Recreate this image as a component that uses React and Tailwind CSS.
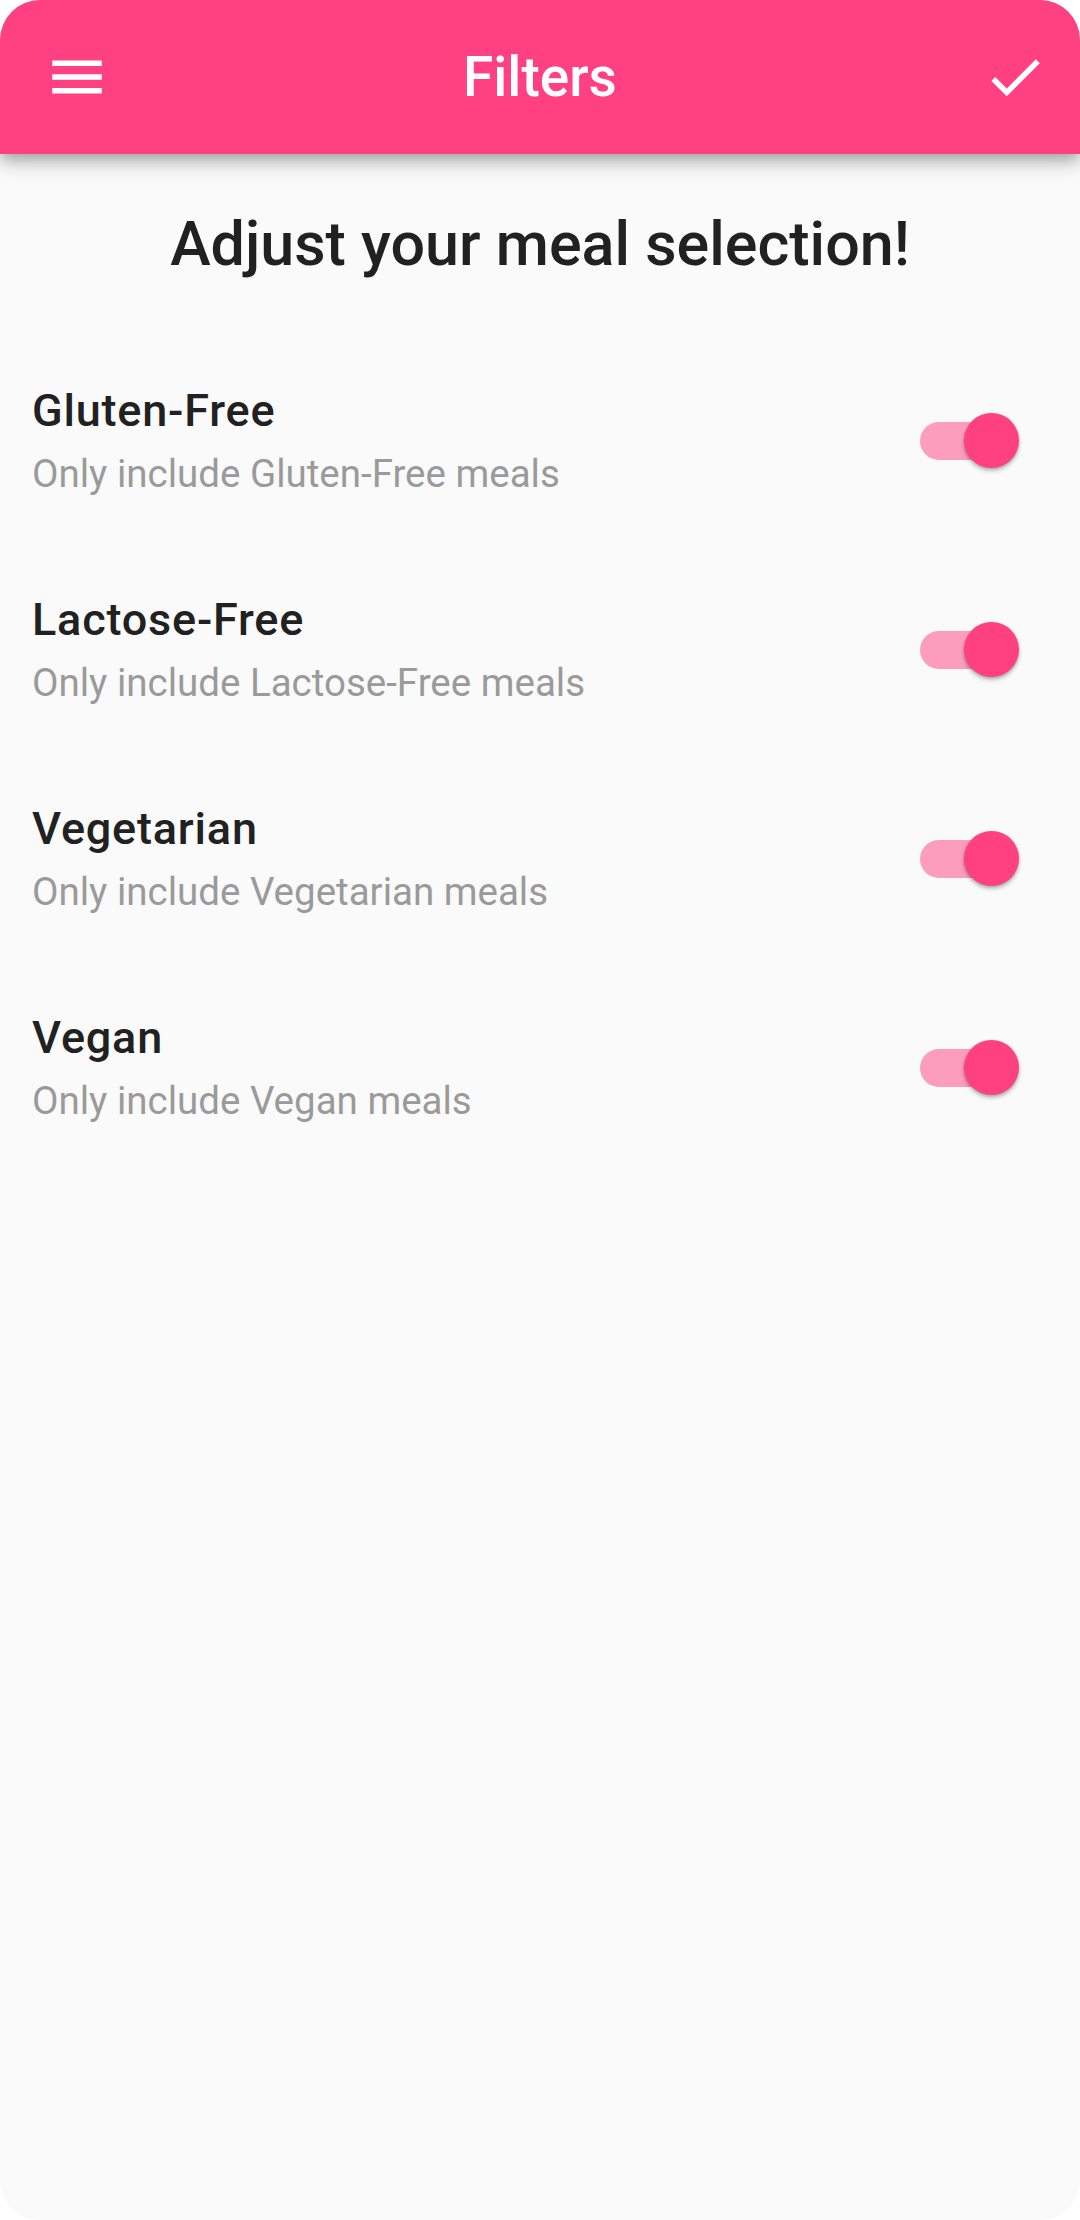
import React from 'react';

const filters = [
    { title: 'Gluten-Free', subtitle: 'Only include Gluten-Free meals' },
    { title: 'Lactose-Free', subtitle: 'Only include Lactose-Free meals' },
    { title: 'Vegetarian', subtitle: 'Only include Vegetarian meals' },
    { title: 'Vegan', subtitle: 'Only include Vegan meals' },
];

const MenuIcon = () => (
    <svg viewBox="0 0 24 24" className="w-[66px] h-[66px]" fill="#ffffff">
        <path d="M3 18h18v-2H3v2zm0-5h18v-2H3v2zm0-7v2h18V6H3z" />
    </svg>
);

const CheckIcon = () => (
    <svg viewBox="0 0 24 24" className="w-[66px] h-[66px]" fill="#ffffff">
        <path d="M9 16.17L4.83 12l-1.42 1.41L9 19 21 7l-1.41-1.41z" />
    </svg>
);

const Toggle = () => (
    <div className="relative w-[99px] h-[55px] shrink-0">
        {/* track */}
        <div className="absolute left-0 top-[8.5px] w-[88px] h-[38px] rounded-full bg-[#fc9dbd]" />
        {/* thumb */}
        <div className="absolute right-0 top-0 w-[55px] h-[55px] rounded-full bg-[#ff4081] shadow-[0_3px_4px_rgba(0,0,0,0.22),0_1px_3px_rgba(0,0,0,0.18)]" />
    </div>
);

export default function App() {
    return (
        <div className="w-[1080px] h-[2220px] bg-white" style={{ fontFamily: 'Roboto, "Noto Sans", sans-serif' }}>
            <div className="w-full h-full rounded-[40px] overflow-hidden bg-[#fafafa] flex flex-col">
                <header className="relative z-10 h-[154px] shrink-0 bg-[#ff4081] grid grid-cols-[1fr_auto_1fr] items-center shadow-[0_5px_11px_-3px_rgba(0,0,0,0.2),0_11px_14px_0_rgba(0,0,0,0.14),0_3px_28px_0_rgba(0,0,0,0.12)]">
                    <div className="pl-[44px] flex">
                        <MenuIcon />
                    </div>
                    <h1 className="text-white text-[55px] font-medium leading-none">Filters</h1>
                    <div className="pr-[32px] flex justify-end">
                        <CheckIcon />
                    </div>
                </header>

                <h2 className="mt-[60px] text-center text-[#212121] text-[61px] font-medium leading-none">
                    Adjust your meal selection!
                </h2>

                <div className="mt-[61px] flex flex-col">
                    {filters.map(f => (
                        <div key={f.title} className="h-[209px] pl-[32px] pr-[61px] flex items-center justify-between">
                            <div className="flex flex-col">
                                <span className="text-[45px] leading-none tracking-[0.8px] text-[#212121] font-medium">{f.title}</span>
                                <span className="mt-[22px] text-[38.5px] leading-none text-[#9a9a9a]">{f.subtitle}</span>
                            </div>
                            <Toggle />
                        </div>
                    ))}
                </div>
            </div>
        </div>
    );
}
